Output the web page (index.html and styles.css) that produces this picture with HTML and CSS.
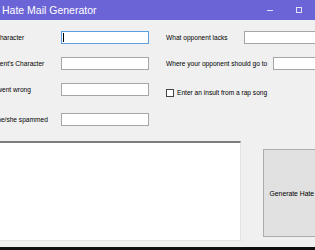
FILE: index.html
```html
<!DOCTYPE html>
<html lang="en">
<head>
  <meta charset="UTF-8">
  <title>Hate Mail Generator</title>
  <link rel="stylesheet" href="styles.css">
</head>
<body>
  <div class="window">
    <!-- Title bar -->
    <div class="titlebar">
      <span class="title">Hate Mail Generator</span>
      <div class="controls">
        <span class="ctl ctl-min"></span>
        <span class="ctl ctl-max"></span>
      </div>
    </div>

    <!-- Form -->
    <div class="client">
      <div class="fields">
        <div class="col col-left">
          <div class="row"><label class="lbl">Your Character</label><span class="focus"><input class="box" type="text"></span></div>
          <div class="row"><label class="lbl">Opponent's Character</label><input class="box" type="text"></div>
          <div class="row"><label class="lbl">What went wrong</label><input class="box" type="text"></div>
          <div class="row row-last"><label class="lbl">What he/she spammed</label><input class="box" type="text"></div>
        </div>
        <div class="col col-right">
          <div class="row"><label class="lbl lbl-lacks">What opponent lacks</label><input class="box box-wide" type="text"></div>
          <div class="row"><label class="lbl lbl-go">Where your opponent should go to</label><input class="box box-wide" type="text"></div>
          <div class="row row-check"><span class="check"></span><label class="lbl">Enter an insult from a rap song</label></div>
        </div>
      </div>

      <div class="bottom">
        <div class="output"></div>
        <button class="generate">Generate Hate Mail</button>
      </div>
    </div>
    <div class="taskbar"></div>
  </div>
</body>
</html>
```

FILE: styles.css
```css
html, body {
  margin: 0;
  padding: 0;
}

body {
  width: 315px;
  height: 250px;
  overflow: hidden;
  background: #f0f0f0;
  font-family: "Liberation Sans", Arial, sans-serif;
  font-size: 6.6px;
  color: #000;
}

.window {
  display: flex;
  flex-direction: column;
  height: 250px;
}

.titlebar {
  height: 20px;
  background: #6b64d6;
  display: flex;
  align-items: center;
  justify-content: space-between;
  color: #fff;
}

.title {
  font-size: 10.5px;
  padding-left: 2px;
}

.controls {
  display: flex;
  align-items: center;
  gap: 23px;
  padding-right: 13px;
}

.ctl-min {
  width: 6px;
  height: 1px;
  background: #e4e2f8;
}

.ctl-max {
  width: 4px;
  height: 4px;
  border: 1px solid #e4e2f8;
}

.client {
  flex: 1;
  display: flex;
  flex-direction: column;
}

.fields {
  display: flex;
  padding-top: 11px;
  gap: 17px;
}

.col {
  flex: none;
  display: flex;
  flex-direction: column;
  gap: 13px;
}

.col-left {
  margin-left: -20px;
}

.row {
  display: flex;
  align-items: center;
  height: 13px;
  white-space: nowrap;
}

.row-last {
  margin-top: 4px;
}

.col-left .lbl {
  width: 81px;
}

.lbl-lacks {
  width: 78px;
}

.lbl-go {
  width: 107px;
}

.box {
  box-sizing: border-box;
  width: 88px;
  height: 13px;
  margin: 0;
  padding: 0;
  border: 1px solid #a6a6a6;
  background: #fff;
  outline: none;
}

.box-wide {
  width: 90px;
}

.focus {
  position: relative;
  display: flex;
}

.focus .box {
  border-color: #5aa0e2;
}

.focus::after {
  content: "";
  position: absolute;
  left: 2px;
  top: 2px;
  width: 1px;
  height: 9px;
  background: #000;
}

.row-check {
  margin-top: 3px;
  gap: 3px;
}

.check {
  box-sizing: border-box;
  width: 8px;
  height: 8px;
  border: 1px solid #444;
  background: #fff;
}

.bottom {
  display: flex;
  align-items: flex-start;
  margin-top: 15px;
  gap: 22px;
}

.output {
  box-sizing: border-box;
  flex: none;
  width: 241px;
  height: 100px;
  background: #fff;
  border-top: 2px solid #7c7c7c;
  border-right: 1px solid #e3e3e3;
  border-bottom: 1px solid #e3e3e3;
}

.generate {
  box-sizing: border-box;
  flex: none;
  width: 72px;
  height: 88px;
  margin: 8px 0 0;
  padding: 0;
  border: 1px solid #adadad;
  background: #e1e1e1;
  font-family: inherit;
  font-size: 6.8px;
  color: #000;
  white-space: nowrap;
}

.taskbar {
  height: 3px;
  background: #101010;
}
```
